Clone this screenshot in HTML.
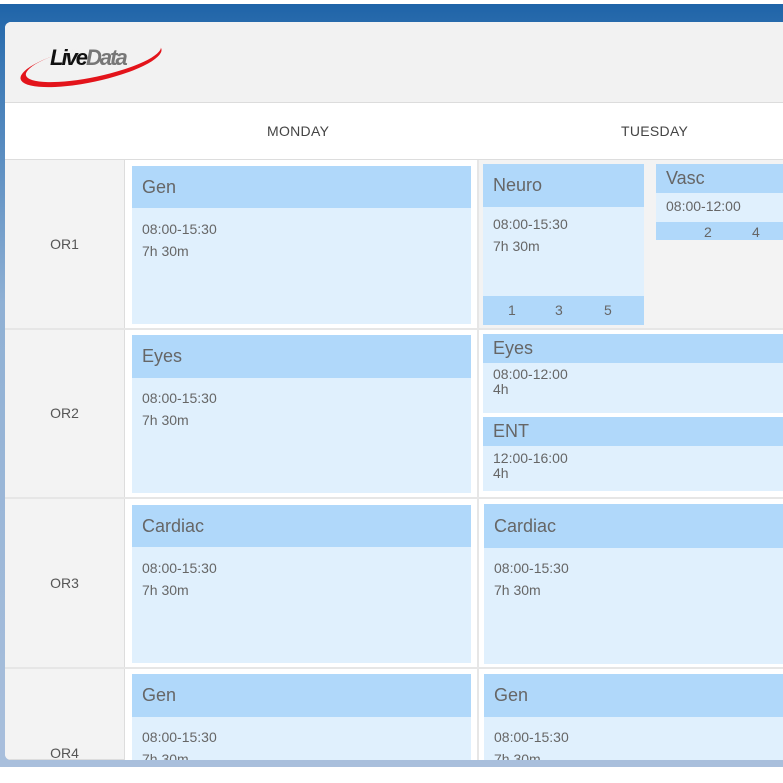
<!DOCTYPE html>
<html><head><style>
*{margin:0;padding:0;box-sizing:border-box}
html,body{width:783px;height:783px;overflow:hidden}
body{background:#fff;font-family:"Liberation Sans",sans-serif;position:relative}
.abs{position:absolute}
.bg{left:0;top:4px;width:783px;height:763px;background:linear-gradient(#1f64a8 0,#3a78b5 60px,#8fb0d4 300px,#a9bfdc 100%)}
.panel{left:5px;top:22px;width:778px;height:738px;background:#fff;border-radius:6px 0 0 6px;overflow:hidden}
.hdr{left:0;top:0;width:100%;height:81px;background:#f2f2f2;border-bottom:1px solid #dcdcdc}
.day{font-size:14px;color:#444;letter-spacing:.3px}
.lc{left:0;width:120px;background:#f3f3f3;border-right:1px solid #ddd;border-bottom:1px solid #ddd;color:#555;font-size:14px;display:flex;align-items:center;justify-content:center}
.blk{background:#e0f0fd;color:#666}
.bh{background:#b0d8fa;color:#666;font-size:18px;padding-left:10px}
.t{font-size:14px;color:#666;padding-left:10px}
</style></head><body>
<div class="abs" style="left:0;top:0;width:783px;height:5px;background:#fff;border-bottom:1px solid #cdd"></div>
<div class="abs bg"></div>
<div class="abs" style="left:0;top:767px;width:783px;height:16px;background:#fff"></div>
<div class="abs panel">
 <div class="abs hdr">
  <svg class="abs" style="left:0;top:0" width="200" height="81" viewBox="0 0 200 81">
   <g transform="rotate(-12 86 42)">
    <ellipse cx="86" cy="42" rx="72" ry="18" fill="#e3141b"/>
    <ellipse cx="89" cy="39.5" rx="69" ry="16" fill="#f2f2f2"/>
   </g>
   <text x="45" y="43" font-family="Liberation Sans" font-weight="bold" font-style="italic" font-size="22" fill="#111" letter-spacing="-2">Live<tspan fill="#777">Data</tspan></text>
  </svg>
 </div>
 <div class="abs day" style="left:262px;top:101px">MONDAY</div>
 <div class="abs day" style="left:616px;top:101px">TUESDAY</div>
 <div class="abs" style="left:0;top:137px;width:778px;height:1px;background:#ddd"></div>
 <div class="abs" style="left:472px;top:138px;width:2px;height:600px;background:#e6e6e6"></div>
 <div class="abs lc" style="top:138px;height:169px">OR1</div>
 <div class="abs lc" style="top:307px;height:169px">OR2</div>
 <div class="abs lc" style="top:476px;height:170px">OR3</div>
 <div class="abs lc" style="top:646px;height:92px;align-items:flex-start;padding-top:77px">OR4</div>
 <div class="abs" style="left:0;top:306px;width:778px;height:2px;background:#e6e6e6"></div>
 <div class="abs" style="left:0;top:475px;width:778px;height:2px;background:#e6e6e6"></div>
 <div class="abs" style="left:0;top:645px;width:778px;height:2px;background:#e6e6e6"></div>
 <div class="abs" style="left:474px;top:138px;width:304px;height:168px;background:#f3f3f3"></div>

 <div class="abs blk" style="left:127px;top:144px;width:339px;height:158px"><div class="bh" style="height:42px;line-height:42px">Gen</div><div class="t" style="margin-top:10px;line-height:22px">08:00-15:30<br>7h 30m</div></div>
 <div class="abs blk" style="left:127px;top:313px;width:339px;height:158px"><div class="bh" style="height:43px;line-height:43px">Eyes</div><div class="t" style="margin-top:9px;line-height:22px">08:00-15:30<br>7h 30m</div></div>
 <div class="abs blk" style="left:127px;top:483px;width:339px;height:158px"><div class="bh" style="height:42px;line-height:42px">Cardiac</div><div class="t" style="margin-top:10px;line-height:22px">08:00-15:30<br>7h 30m</div></div>
 <div class="abs blk" style="left:127px;top:652px;width:339px;height:86px;overflow:hidden"><div class="bh" style="height:43px;line-height:43px">Gen</div><div class="t" style="margin-top:9px;line-height:22px">08:00-15:30<br>7h 30m</div></div>

 <div class="abs blk" style="left:478px;top:142px;width:161px;height:161px"><div class="bh" style="height:43px;line-height:43px">Neuro</div><div class="t" style="margin-top:6px;line-height:22px">08:00-15:30<br>7h 30m</div>
  <div class="abs" style="left:0;top:132px;width:161px;height:29px;background:#b0d8fa;font-size:14px;line-height:29px;color:#666"><span class="abs" style="left:25px">1</span><span class="abs" style="left:72px">3</span><span class="abs" style="left:121px">5</span></div></div>
 <div class="abs blk" style="left:651px;top:142px;width:127px;height:76px"><div class="bh" style="height:29px;line-height:29px">Vasc</div><div class="t" style="line-height:27px">08:00-12:00</div>
  <div class="abs" style="left:0;top:58px;width:127px;height:18px;background:#b0d8fa;font-size:14px;line-height:20px;color:#666"><span class="abs" style="left:48px">2</span><span class="abs" style="left:96px">4</span></div></div>
 <div class="abs blk" style="left:478px;top:312px;width:300px;height:79px"><div class="bh" style="height:29px;line-height:29px">Eyes</div><div class="t" style="padding-top:4px;line-height:15px">08:00-12:00<br>4h</div></div>
 <div class="abs blk" style="left:478px;top:395px;width:300px;height:74px"><div class="bh" style="height:29px;line-height:29px">ENT</div><div class="t" style="padding-top:5px;line-height:15px">12:00-16:00<br>4h</div></div>
 <div class="abs blk" style="left:479px;top:482px;width:299px;height:160px"><div class="bh" style="height:44px;line-height:44px">Cardiac</div><div class="t" style="margin-top:9px;line-height:22px">08:00-15:30<br>7h 30m</div></div>
 <div class="abs blk" style="left:479px;top:652px;width:299px;height:86px;overflow:hidden"><div class="bh" style="height:43px;line-height:43px">Gen</div><div class="t" style="margin-top:9px;line-height:22px">08:00-15:30<br>7h 30m</div></div>
</div>
</body></html>
